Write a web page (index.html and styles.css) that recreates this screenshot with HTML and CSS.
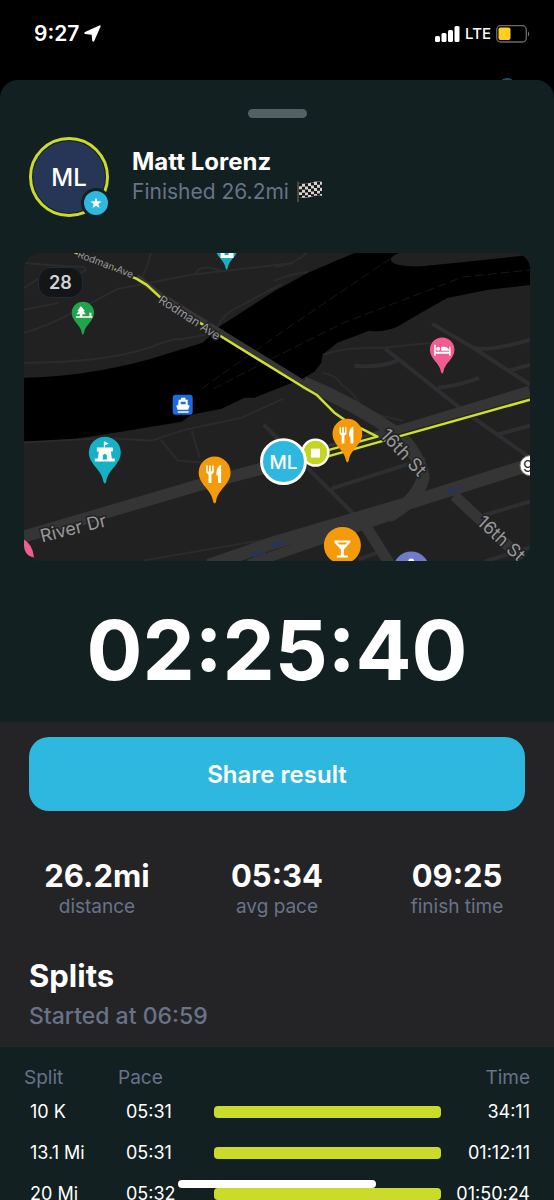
FILE: index.html
```
<!DOCTYPE html>
<html lang="en">
<head>
  <meta charset="UTF-8">
  <meta name="viewport" content="width=device-width, initial-scale=1.0">
  <title>Matt Lorenz</title>
  <link rel="stylesheet" href="styles.css">
</head>
<body>
  <header class="status-bar">
    <div class="status-group">
      <span class="status-time">9:27</span>
      <svg class="icon-location" viewBox="0 0 17 17"><path d="M16.600 1.600 10.200 16c-.5 1.100-1.900.8-2-.4L7.700 9.700 1.300 9C.1 8.900-.1 7.500 1 7L15.300.4c.9-.4 1.700.2 1.300 1.200z" fill="#fff"/></svg>
    </div>
    <div class="status-group">
      <svg class="icon-signal" viewBox="0 0 25 16" fill="#fff">
        <rect x="0" y="10" width="5" height="6" rx="1.500"/>
        <rect x="6.500" y="7" width="5" height="9" rx="1.500"/>
        <rect x="13" y="4" width="5" height="12" rx="1.500"/>
        <rect x="19.500" y="0" width="5" height="16" rx="1.500"/>
      </svg>
      <span class="status-net">LTE</span>
      <svg class="icon-battery" viewBox="0 0 34 18">
        <rect x=".7" y=".7" width="29.600" height="16.300" rx="4" fill="none" stroke="#6b6b6b" stroke-width="1.300"/>
        <rect x="2.500" y="2.600" width="12" height="12.500" rx="2" fill="#fdd020"/>
        <path d="M32 6.500c1.500.6 1.500 4.200 0 4.800z" fill="#777"/>
      </svg>
    </div>
  </header>

  <main class="sheet">
    <div class="handle"></div>

    <section class="runner">
      <div class="avatar">
        <span class="avatar-initials">ML</span>
        <span class="avatar-badge">
          <svg viewBox="0 0 12 12"><path d="M6 .4 7.400 4.300 11.600 4.400 8.300 7 9.500 11.100 6 8.700 2.500 11.100 3.700 7 .4 4.400 4.600 4.300z" fill="#fff"/></svg>
        </span>
      </div>
      <div>
        <h1 class="runner-name">Matt Lorenz</h1>
        <p class="runner-status">Finished 26.2mi
          <svg class="icon-flag" viewBox="0 0 26 22">
            <path d="M1 .5v20.500" stroke="#5d5450" stroke-width="1.500"/>
            <path d="M2 2c8 3 14-3 23-1v14c-8-2-14 4-23 1z" fill="#d8d3d0"/>
            <g fill="#191919">
              <path d="M2 2.300h3v3H2zM8 2.500h3v3H8zM14 1.400h3v3h-3zM20 .7h3v3h-3zM5 5.700h3v3H5zM11 5h3v3h-3zM17 4h3v3h-3zM23 3.800h2v3h-2zM2 8.300h3v3H2zM8 8.500h3v3H8zM14 7.500h3v3h-3zM20 6.800h3v3h-3zM5 11.800h3v3H5zM11 11h3v3h-3zM17 10h3v3h-3zM23 10h2v3h-2zM2 14h3v2.400H2zM8 14.300h3v2H8zM14 13.300h3v2h-3zM20 12.500h3v2h-3z"/>
            </g>
          </svg>
        </p>
      </div>
    </section>

    <section class="map">
      <svg class="map-canvas" viewBox="0 0 507 309" preserveAspectRatio="xMidYMid slice">
        <defs>
          <!-- pin with its head centred on 0,0 and radius 16 -->
          <path id="pin" d="M0-16A16 16 0 0 0-16 0C-16 12-3 17-1.500 29Q0 33 1.500 29C3 17 16 12 16 0A16 16 0 0 0 0-16z"/>
          <g id="fork" fill="#fff">
            <path d="M-8.500-8h1.600v6h1.300v-6h1.800v6h1.300v-6h1.600v6.500Q-1 0-3.200 1v8.500h-2.900V1Q-8.500 0-8.500-1.500z"/>
            <path d="M6.500-8.500v18H3.400V2H1.800C1.500-3 3-8 6.500-8.500z"/>
          </g>
        </defs>
        <rect width="507" height="309" fill="#212122"/>

        <!-- river -->
        <path fill="#000" d="M0 125Q60 124 124 107L179 90 183 86 194 75 251 38 284 20 331 0H376Q363 5 370 10 377 14 401 13L441 9 498 3 507 2V32L464 37 424 45 398 60 374 74Q360 80 346 78L314 90 299 102 298 110 291 119 279 126 251 137 231 145 221 145 198 156 168 162 158 169 91 180 41 188 0 189z"/>
        <g fill="none" stroke="#171718" stroke-dasharray="9 4">
          <path d="M178 136 260 78 368 5M190 136 250 105 320 70 440 24 507 17"/>
        </g>

        <!-- small streets -->
        <g fill="none" stroke="#2b2b2c" stroke-width="2">
          <path d="M0 80Q25 73 56 56 90 38 94 36L166 22 270 10M0 110Q80 110 125 95 150 85 160 86L182 82"/>
          <path d="M0 10Q30 13 60 14 66 18 54 20L20 22 0 35M0 57 35 50M115 30Q123 18 127 0M172 22Q172 14 188 15L198 18M194 74Q199 61 215 54L258 31M252 14Q270 12 283 0M250 28Q270 20 284 19"/>
          <path d="M0 190Q60 186 90 186L128 188 158 178 218 165 260 146M137 187 154 208 178 210M168 178 176 205M120 308 190 296 250 286"/>
          <path d="M299 120Q313 122 318 132 334 142 340 159L380 168M300 102Q320 94 360 95L408 90"/>
        </g>
        <g fill="none" stroke="#2e2e30" stroke-width="4">
          <path d="M409 71 450 95 507 132M450 95Q465 99 507 87M331 113Q355 115 374 108M362 96 440 158 507 205M415 135Q440 132 456 125M486 118 507 112M474 182 507 173M240 172 332 263M308 236 402 206M460 263 507 249M335 307 355 300M462 309 507 295"/>
        </g>

        <!-- main roads -->
        <g fill="none" stroke="#353536" stroke-linejoin="round">
          <path d="M0 284 174 233 250 213 378 178 507 139" stroke-width="12"/>
          <path d="M185 313 251 290 384 251 507 212" stroke-width="13"/>
          <path d="M225 312 300 286 370 262" stroke-width="10"/>
          <path d="M113 24 136 42 281 131" stroke-width="6"/>
          <path d="M280 130Q330 150 378 184 397 205 400 225 395 247 365 264" stroke-width="13"/>
          <path d="M431 243 507 314M340 270 368 314" stroke-width="11"/>
        </g>
        <g fill="#26345c">
          <path d="m423 238 6-3v2l10-3v3l-10 3v2zM226 302l6-3v2l10-3v3l-10 3v2zM247 292l6-3v2l8-3v3l-8 3v2z"/>
        </g>

        <!-- route -->
        <g fill="none" stroke="#242611" stroke-width="5">
          <path d="M306 197 354 184M306 203 507 147"/>
        </g>
        <g fill="none" stroke="#cfe02f" stroke-width="2.500" stroke-linejoin="round">
          <path d="M48-2 113 26 123 32 136 44 198 84 281 135 293 142 311 160 324 169 354 184 292 201"/>
          <path d="M300 205 507 147"/>
        </g>

        <g class="street-label">
          <text class="street-xs" transform="translate(53 4) rotate(21)">Rodman Ave</text>
          <text class="street-sm" transform="translate(134 49) rotate(33)">Rodman Ave</text>
          <text class="street-md" transform="translate(18 290) rotate(-14)">River Dr</text>
          <text class="street-md" transform="translate(356 183) rotate(47)">16th St</text>
          <text class="street-md" transform="translate(453 271) rotate(43)">16th St</text>
        </g>

        <g fill="#22a44a"><use href="#pin" transform="translate(59 60) scale(.7)"/></g>
        <path d="M57 53l4 5h-1.500l2.500 3.500h-3.500v2h7v-3.500h2v3.500h1v1.500H52v-1.500h4v-2h-3.500l2.500-3.500h-1.500z" fill="#fff"/>
        <g fill="#16b1c4"><use href="#pin" transform="translate(203 -5) scale(.7)"/></g>
        <path d="M197-3h13v8h-13z" fill="#fff"/><path d="M201-2h4v4h-4z" fill="#16b1c4"/>
        <g fill="#f45c91"><use href="#pin" transform="translate(419 97) scale(.77)"/></g>
        <path d="M411 92h1.500v7H426v-5h1.500v9H426v-2h-13.500v2H411zM418 94h3q4 0 5 4h-8z" fill="#fff"/><circle cx="415" cy="96" r="2" fill="#fff"/>
        <g fill="#16b1c4"><use href="#pin" transform="translate(81 200)"/></g>
        <path d="M80 189h1l4 2-4 2v2h8v4h-2l1 7h3v3H71v-3h3l1-7h-2v-4h7z" fill="#fff"/><path d="M79 207v-4q2-3 4 0v4z" fill="#16b1c4"/>
        <g fill="#f59b0b"><use href="#pin" transform="translate(191 220)"/><use href="#pin" transform="translate(324 181) scale(.93)"/></g>
        <use href="#fork" transform="translate(191 221)"/>
        <use href="#fork" transform="translate(324 182) scale(.93)"/>
        <circle cx="319" cy="293" r="18.500" fill="#f59b0b"/>
        <path d="M311 288h16v2l-6.500 7v6h4v2h-11v-2h4v-6l-6.500-7zM314 290h10l-2 2h-6z" fill="#fff" fill-rule="evenodd"/>
        <circle cx="388" cy="317" r="18" fill="#6f7bc8"/>
        <circle cx="388" cy="309" r="3" fill="#fff"/>
        <path d="M0 287Q9 292 10 305 3 304 0 297z" fill="#f45c91"/>

        <!-- ferry terminal -->
        <rect x="149" y="142" width="20" height="20" rx="3" fill="#1d6be0"/>
        <path d="M155 147h2l.5-2h4l.5 2h2v5l2 1-1.500 4h-10.500l-1.500-4 2-1zM157 149v2.500h5V149zM154 158.500h11v1.500h-11z" fill="#fff" fill-rule="evenodd"/>

        <!-- finish and runner -->
        <circle cx="292" cy="200" r="13" fill="#c4d622" stroke="#fff" stroke-width="2.500"/>
        <rect x="287.500" y="196" width="9" height="9" fill="#fff"/>
        <circle cx="260" cy="209" r="22" fill="#2fb8df" stroke="#fff" stroke-width="3"/>
        <text class="marker-text" x="260" y="216">ML</text>
        <circle cx="507" cy="213" r="10" fill="#fff" stroke="#777"/>
        <text class="shield-text" x="500" y="219">9</text>
      </svg>
      <span class="map-badge">28</span>
    </section>

    <p class="timer">02:25:40</p>

    <section class="summary">
      <button type="button" class="btn">Share result</button>

      <dl class="stats">
        <div class="stat"><dd>26.2mi</dd><dt>distance</dt></div>
        <div class="stat"><dd>05:34</dd><dt>avg pace</dt></div>
        <div class="stat"><dd>09:25</dd><dt>finish time</dt></div>
      </dl>

      <h2 class="splits-title">Splits</h2>
      <p class="splits-start">Started at 06:59</p>
    </section>

    <table class="splits">
      <thead>
        <tr><th class="col-split">Split</th><th class="col-pace">Pace</th><th></th><th class="col-time">Time</th></tr>
      </thead>
      <tbody>
        <tr><td>10 K</td><td>05:31</td><td><div class="bar"></div></td><td>34:11</td></tr>
        <tr><td>13.1 Mi</td><td>05:31</td><td><div class="bar"></div></td><td>01:12:11</td></tr>
        <tr><td>20 Mi</td><td>05:32</td><td><div class="bar"></div></td><td>01:50:24</td></tr>
      </tbody>
    </table>
  </main>

  <div class="home-indicator"></div>
</body>
</html>
```
FILE: styles.css
```
:root {
  --sheet: #122021;
  --panel: #242426;
  --blue: #2fb8df;
  --lime: #cbdb2a;
  --muted: #687389;
}

* {
  box-sizing: border-box;
  margin: 0;
  padding: 0;
}

body {
  font-family: Inter, -apple-system, 'Helvetica Neue', sans-serif;
  color: #fff;
  background-color: #000;
  height: 100vh;
  overflow: hidden;
}

.status-bar {
  position: relative;
  display: flex;
  align-items: center;
  justify-content: space-between;
  height: 80px;
  padding: 0 24px 13px 34px;
}

/* top of the round button hidden behind the sheet */
.status-bar::after {
  content: '';
  position: absolute;
  top: 78px;
  right: 38px;
  width: 18px;
  height: 18px;
  border-radius: 50%;
  background-color: #22505f;
}

.status-group {
  display: flex;
  align-items: center;
  gap: 5px;
}

.status-time {
  font-size: 21px;
  font-weight: 600;
}

.status-net {
  font-size: 15px;
  font-weight: 500;
}

.icon-location {
  width: 17px;
  height: 17px;
}

.icon-signal {
  width: 25px;
  height: 16px;
}

.icon-battery {
  width: 34px;
  height: 18px;
}

.sheet {
  position: relative;
  background-color: var(--sheet);
  border-radius: 18px 18px 0 0;
  min-height: calc(100vh - 80px);
  padding-top: 29px;
}

.handle {
  width: 59px;
  height: 9px;
  margin: 0 auto;
  border-radius: 5px;
  background-color: #536064;
}

.runner {
  display: flex;
  align-items: center;
  gap: 23px;
  padding: 19px 29px 36px;
}

.avatar {
  position: relative;
  width: 80px;
  height: 80px;
  padding: 1px;
  border: 3px solid var(--lime);
  border-radius: 50%;
}

.avatar-initials {
  display: flex;
  align-items: center;
  justify-content: center;
  height: 100%;
  border-radius: 50%;
  background-color: #273657;
  font-size: 24px;
  font-weight: 500;
}

.avatar-badge {
  position: absolute;
  right: -5px;
  bottom: -4px;
  display: flex;
  align-items: center;
  justify-content: center;
  width: 30px;
  height: 30px;
  border: 3px solid var(--sheet);
  border-radius: 50%;
  background-color: var(--blue);
}

.avatar-badge svg {
  width: 12px;
  height: 12px;
}

.runner-name {
  font-size: 24px;
  font-weight: 700;
  line-height: 30px;
}

.runner-status {
  display: flex;
  align-items: center;
  gap: 8px;
  color: var(--muted);
  font-size: 21px;
  line-height: 30px;
}

.icon-flag {
  width: 26px;
  height: 22px;
}

.map {
  position: relative;
  margin: 0 24px;
  border-radius: 16px;
  overflow: hidden;
}

.map-canvas {
  display: block;
  width: 100%;
}

.map-badge {
  position: absolute;
  top: 14px;
  left: 14px;
  padding: 0 10px;
  border: 1px solid #1e2c3c;
  border-radius: 13px;
  background-color: #131516;
  color: #d0d3d8;
  font-size: 18px;
  font-weight: 600;
  line-height: 29px;
}

.street-label {
  fill: #98989a;
  stroke: #212122;
  stroke-width: 3px;
  paint-order: stroke;
}

.street-xs {
  font-size: 10px;
}

.street-sm {
  font-size: 12px;
}

.street-md {
  font-size: 18px;
}

.marker-text {
  fill: #fff;
  font-size: 19px;
  font-weight: 500;
  text-anchor: middle;
}

.shield-text {
  fill: #333;
  font-size: 16px;
}

.timer {
  padding: 37px 0 19px;
  font-size: 83px;
  font-weight: 700;
  line-height: 105px;
  text-align: center;
}

.summary {
  background-color: var(--panel);
  padding: 15px 29px 12px;
}

.btn {
  display: block;
  width: 100%;
  height: 74px;
  border: none;
  border-radius: 20px;
  background-color: var(--blue);
  color: #fff;
  font-family: inherit;
  font-size: 24px;
  font-weight: 600;
  cursor: pointer;
}

.stats {
  display: grid;
  grid-template-columns: repeat(3, 1fr);
  margin: 46px -22px 36px;
  text-align: center;
}

.stat {
  display: flex;
  flex-direction: column;
}

.stat dd {
  font-size: 31px;
  font-weight: 700;
  line-height: 38px;
}

.stat dt {
  color: var(--muted);
  font-size: 19px;
  line-height: 24px;
}

.splits-title {
  font-size: 31px;
  font-weight: 700;
  line-height: 42px;
}

.splits-start {
  color: var(--muted);
  font-size: 23px;
  font-weight: 500;
  line-height: 38px;
}

.splits {
  width: 100%;
  padding: 16px 24px 0;
  border-spacing: 0;
  table-layout: fixed;
}

.splits th {
  height: 28px;
  color: var(--muted);
  font-size: 19px;
  font-weight: 400;
  text-align: left;
}

.splits td {
  height: 41px;
  font-size: 18px;
  padding-left: 6px;
}

.col-split {
  width: 94px;
}

.col-pace {
  width: 90px;
}

.col-time {
  width: 89px;
}

.splits th:last-child,
.splits td:last-child {
  padding: 0;
  text-align: right;
}

.splits td:nth-child(2) {
  padding-left: 8px;
}

.bar {
  height: 12px;
  border-radius: 4px;
  background-color: var(--lime);
}

.home-indicator {
  position: fixed;
  bottom: 12px;
  left: 50%;
  width: 198px;
  height: 8px;
  margin-left: -99px;
  border-radius: 4px;
  background-color: #fff;
}
```
